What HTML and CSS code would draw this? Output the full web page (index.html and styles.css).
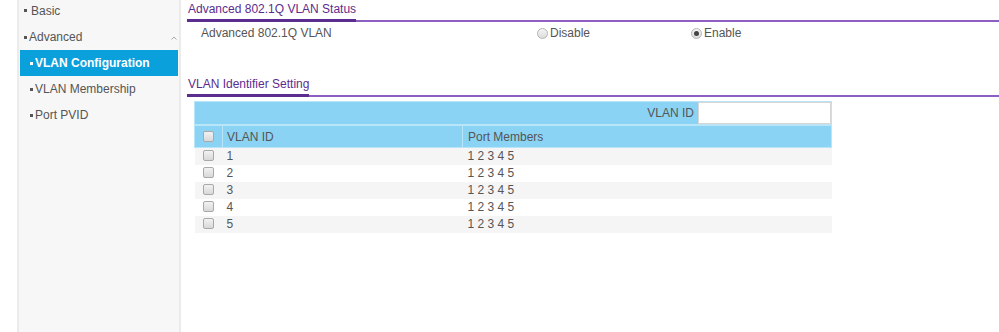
FILE: index.html
```html
<!DOCTYPE html>
<html>
<head>
<meta charset="utf-8">
<link rel="stylesheet" href="styles.css">
</head>
<body>
<div class="page">
  <div class="gutter"></div>
  <nav class="sidebar">
    <div class="nav-item top basic"><span class="bullet"></span><span class="lbl gap">Basic</span></div>
    <div class="nav-item top"><span class="bullet"></span><span class="lbl">Advanced</span><svg class="caret" width="6" height="4" viewBox="0 0 6 4"><path d="M0.5 3.5 L3 1 L5.5 3.5" fill="none" stroke="#aaa" stroke-width="1"/></svg></div>
    <div class="nav-item sub active"><span class="bullet"></span><span class="lbl">VLAN Configuration</span></div>
    <div class="nav-item sub"><span class="bullet"></span><span class="lbl">VLAN Membership</span></div>
    <div class="nav-item sub"><span class="bullet"></span><span class="lbl">Port PVID</span></div>
  </nav>
  <main class="main">
    <div class="sect-head"><span class="sect-title">Advanced 802.1Q VLAN Status</span></div>
    <div class="status-row">
      <span class="status-label">Advanced 802.1Q VLAN</span>
      <span class="radio-opt disable"><span class="radio"></span>Disable</span>
      <span class="radio-opt"><span class="radio on"></span>Enable</span>
    </div>
    <div class="sect-head second"><span class="sect-title">VLAN Identifier Setting</span></div>
    <table class="vtable">
      <colgroup><col class="w-chk"><col class="w-id"><col class="w-mem"></colgroup>
      <tr class="top-bar">
        <td colspan="3"><div class="search"><span>VLAN ID</span><span class="inp"></span></div></td>
      </tr>
      <tr class="head">
        <td class="c-chk"><span class="chk"></span></td>
        <td class="c-id">VLAN ID</td>
        <td class="c-mem">Port Members</td>
      </tr>
      <tr class="odd"><td class="c-chk"><span class="chk"></span></td><td class="c-id">1</td><td class="c-mem">1 2 3 4 5</td></tr>
      <tr><td class="c-chk"><span class="chk"></span></td><td class="c-id">2</td><td class="c-mem">1 2 3 4 5</td></tr>
      <tr class="odd"><td class="c-chk"><span class="chk"></span></td><td class="c-id">3</td><td class="c-mem">1 2 3 4 5</td></tr>
      <tr><td class="c-chk"><span class="chk"></span></td><td class="c-id">4</td><td class="c-mem">1 2 3 4 5</td></tr>
      <tr class="odd"><td class="c-chk"><span class="chk"></span></td><td class="c-id">5</td><td class="c-mem">1 2 3 4 5</td></tr>
    </table>
  </main>
</div>
</body>
</html>
```
FILE: styles.css
```css
html, body { margin: 0; padding: 0; background: #fff; }
body { font-family: "Liberation Sans", Arial, sans-serif; font-size: 12px; color: #555; }
.page { display: flex; height: 332px; }
.gutter { width: 17px; flex: none; }
.sidebar {
  width: 160px; flex: none; background: #f7f7f7;
  border-left: 2px solid #ebebeb; border-right: 2px solid #ebebeb;
  padding-top: 0;
}
.nav-item { display: flex; align-items: center; height: 26px; position: relative; }
.nav-item.basic { height: 24px; padding-bottom: 3px; box-sizing: border-box; }
.nav-item.top { padding-left: 5px; }
.nav-item.sub { padding-left: 11px; }
.bullet { width: 3px; height: 3px; background: #555; margin-right: 2px; flex: none; }
.lbl.gap { margin-left: 2px; }
.nav-item.active { background: #0aa0dc; color: #fff; font-weight: bold; margin-left: 1px; margin-right: 1px; padding-left: 10px; }
.nav-item.active .bullet { background: #fff; }
.caret { position: absolute; right: 2px; top: 12px; }
.main { flex: 1; padding-left: 6px; }
.sect-head { border-bottom: 2px solid #8d5fc3; line-height: 14px; }
.sect-title {
  display: inline-block; color: #5b2d8e; padding: 2px 0 3px 1px;
  border-bottom: 3px solid #5b2d8e; margin-bottom: -2px;
}
.sect-head.second { margin-top: 31px; }
.status-row { display: flex; align-items: center; height: 22px; padding-left: 14px; }
.status-label { width: 336px; }
.radio-opt { display: inline-flex; align-items: center; }
.radio-opt.disable { width: 154px; }
.radio {
  width: 9px; height: 9px; border-radius: 50%; border: 1px solid #b5b5b5;
  background: linear-gradient(#f4f4f4, #dcdcdc); margin-right: 2px; position: relative;
}
.radio.on::after {
  content: ""; position: absolute; left: 2px; top: 2px; width: 5px; height: 5px;
  border-radius: 50%; background: #444;
}
.vtable {
  margin-top: 4px; margin-left: 7px; width: 638px; border-collapse: collapse;
  table-layout: fixed;
}
.w-chk { width: 28px; }
.w-id { width: 240px; }
.vtable td { padding: 0; }
.top-bar td { background: #8bd3f4; height: 21px; border: 1px solid #b8e5f8; border-bottom: 2px solid #b8e5f8; }
.search { display: flex; justify-content: flex-end; align-items: center; color: #555; }
.search .inp { width: 131px; height: 20px; background: #fff; border: 1px solid #d6d6d6; margin-left: 4px; }
.head td { background: #8bd3f4; height: 21px; border-left: 1px solid #b8e5f8; border-right: 1px solid #b8e5f8; border-bottom: 1px solid #b8e5f8; }
.c-chk { text-align: center; }
.vtable td.c-id { padding-left: 4px; }
.vtable td.c-mem { padding-left: 5px; }
.vtable tr:not(.top-bar):not(.head) td { height: 17px; line-height: 17px; }
.vtable tr.odd td { background: #f5f5f5; }
.chk {
  display: inline-block; width: 9px; height: 9px; border: 1px solid #a9a9a9; border-radius: 2px;
  background: linear-gradient(#f2f2f2, #d8d8d8); vertical-align: middle; position: relative; top: -1px;
}
```
